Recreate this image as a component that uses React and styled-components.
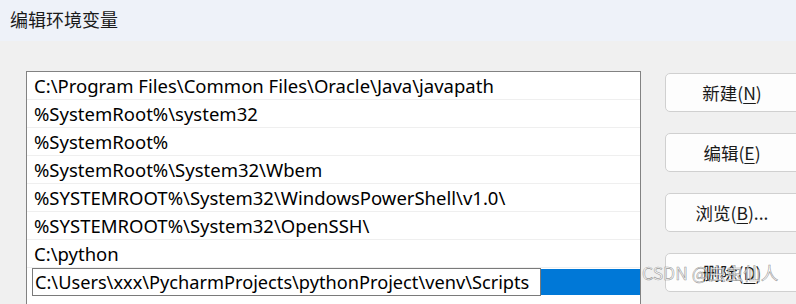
import React from "react";
import styled, { createGlobalStyle } from "styled-components";

const GlobalStyle = createGlobalStyle`
  html, body {
    margin: 0;
    padding: 0;
    background: #f0f0f0;
    overflow: hidden;
  }
  body {
    font-family: "Noto Sans", "Noto Sans CJK SC", sans-serif;
  }
`;

const paths = [
  "C:\\Program Files\\Common Files\\Oracle\\Java\\javapath",
  "%SystemRoot%\\system32",
  "%SystemRoot%",
  "%SystemRoot%\\System32\\Wbem",
  "%SYSTEMROOT%\\System32\\WindowsPowerShell\\v1.0\\",
  "%SYSTEMROOT%\\System32\\OpenSSH\\",
  "C:\\python",
];

const Window = styled.div`
  width: 796px;
  height: 304px;
  position: relative;
  overflow: hidden;
  background: #f0f0f0;
`;

const TitleBar = styled.div`
  height: 41px;
  background: #eef2f9;
  padding-left: 10px;
  display: flex;
  align-items: center;
  font-family: "Noto Sans CJK SC", sans-serif;
  font-size: 18px;
  color: #1a1a1a;
  padding-bottom: 4px;
  box-sizing: border-box;
`;

const Body = styled.div`
  display: flex;
  padding: 30px 0 0 26px;
  gap: 24px;
`;

const ListBox = styled.div`
  flex-shrink: 0;
  width: 615px;
  height: 260px;
  border: 1px solid #828282;
  border-bottom: none;
  background: #fff;
  box-sizing: border-box;
`;

const Row = styled.div`
  height: 28px;
  box-sizing: border-box;
  border-bottom: 1px solid #efefef;
  padding-left: 7px;
  display: flex;
  align-items: center;
  font-size: 18.5px;
  color: #000;
  white-space: nowrap;
`;

const EditRow = styled.div`
  height: 28px;
  display: flex;
  padding-left: 5px;
`;

const EditBox = styled.div`
  width: 509px;
  height: 28px;
  box-sizing: border-box;
  border: 1px solid #7a7a7a;
  background: #fff;
  padding-left: 2px;
  display: flex;
  align-items: center;
  font-size: 18.2px;
  color: #000;
  white-space: nowrap;
  overflow: hidden;
`;

const Highlight = styled.div`
  flex: 1;
  height: 26px;
  margin-top: 1px;
  background: #0078d7;
`;

const Buttons = styled.div`
  flex-shrink: 0;
  display: flex;
  flex-direction: column;
  gap: 21px;
  padding-top: 2px;
`;

const Button = styled.div`
  width: 136px;
  height: 39px;
  box-sizing: border-box;
  border: 1px solid #d0d0d0;
  border-radius: 5px;
  background: #fdfdfd;
  display: flex;
  align-items: center;
  justify-content: center;
  padding-right: 2px;
  font-family: "Noto Sans CJK SC", sans-serif;
  font-size: 17.5px;
  color: #1a1a1a;
  u {
    text-decoration-thickness: 1px;
    text-underline-offset: 3px;
  }
`;

const Watermark = styled.div`
  position: absolute;
  left: 642px;
  top: 260px;
  font-family: "Noto Sans CJK SC", sans-serif;
  font-size: 17.5px;
  color: rgba(255, 255, 255, 0.75);
  -webkit-text-stroke: 0.6px rgba(120, 120, 120, 0.75);
  white-space: nowrap;
`;

export default function App() {
  return (
    <Window>
      <GlobalStyle />
      <TitleBar>编辑环境变量</TitleBar>
      <Body>
        <ListBox>
          {paths.map((p) => (
            <Row key={p}>{p}</Row>
          ))}
          <EditRow>
            <EditBox>C:\Users\xxx\PycharmProjects\pythonProject\venv\Scripts</EditBox>
            <Highlight />
          </EditRow>
        </ListBox>
        <Buttons>
          <Button>新建(<u>N</u>)</Button>
          <Button>编辑(<u>E</u>)</Button>
          <Button>浏览(<u>B</u>)...</Button>
          <Button>删除(<u>D</u>)</Button>
        </Buttons>
      </Body>
      <Watermark>CSDN @虫虫仙人</Watermark>
    </Window>
  );
}
